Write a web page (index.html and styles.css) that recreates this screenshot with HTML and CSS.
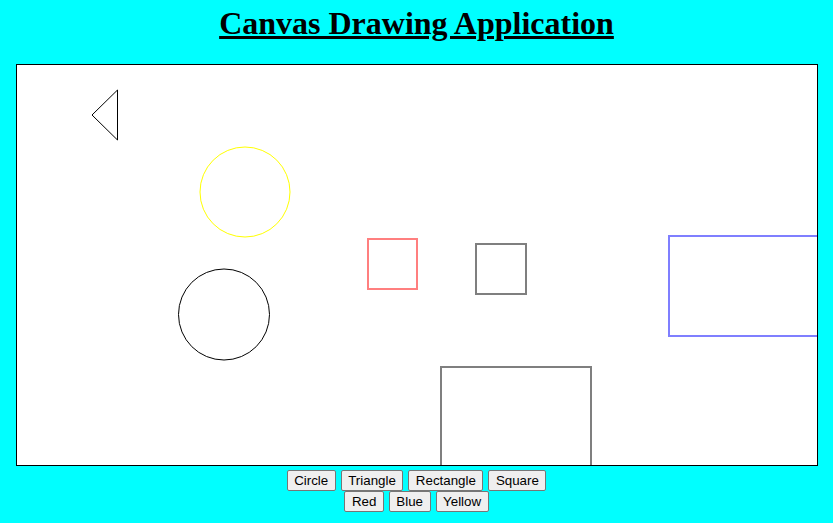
FILE: index.html
```html
<!DOCTYPE html>
<html>
<head>
<meta charset="utf-8">
<title>Canvas Drawing Application</title>
<link rel="stylesheet" href="styles.css">
</head>
<body>
<h1 class="title">Canvas Drawing Application</h1>
<div class="board">
  <svg class="canvas" width="800" height="400" viewBox="0 0 800 400" xmlns="http://www.w3.org/2000/svg">
    <path d="M100.5 25 L100.5 75 L75 50 Z" fill="none" stroke="#000" stroke-width="1"/>
    <circle cx="228" cy="127" r="45" fill="none" stroke="#ffff00" stroke-width="1"/>
    <circle cx="207" cy="249.5" r="45.5" fill="none" stroke="#000" stroke-width="1"/>
    <rect x="351" y="174" width="49" height="50" fill="none" stroke="rgba(255,0,0,0.5)" stroke-width="2"/>
    <rect x="459" y="179" width="50" height="50" fill="none" stroke="rgba(0,0,0,0.5)" stroke-width="2"/>
    <rect x="652" y="171" width="150" height="100" fill="none" stroke="rgba(0,0,255,0.5)" stroke-width="2"/>
    <rect x="424" y="302" width="150" height="100" fill="none" stroke="rgba(0,0,0,0.5)" stroke-width="2"/>
  </svg>
</div>
<div class="controls">
  <div class="row">
    <button class="btn">Circle</button>
    <button class="btn">Triangle</button>
    <button class="btn">Rectangle</button>
    <button class="btn">Square</button>
  </div>
  <div class="row">
    <button class="btn">Red</button>
    <button class="btn">Blue</button>
    <button class="btn">Yellow</button>
  </div>
</div>
</body>
</html>
```
FILE: styles.css
```css
html, body {
  margin: 0;
  padding: 0;
  background: #00ffff;
}
body {
  font-family: "Liberation Serif", "Times New Roman", serif;
}
.title {
  margin: 5px 0 22px;
  text-align: center;
  font-size: 32px;
  font-weight: bold;
  text-decoration: underline;
  line-height: 37px;
}
.board {
  width: 800px;
  height: 400px;
  margin: 0 auto;
  border: 1px solid #000;
  background: #fff;
  position: relative;
  left: 0.5px;
}
.canvas {
  display: block;
  overflow: hidden;
}
.controls {
  display: flex;
  flex-direction: column;
  align-items: center;
  margin-top: 4px;
}
.row {
  display: flex;
  gap: 5px;
}
.btn {
  box-sizing: border-box;
  height: 21px;
  padding: 0 6.5px;
  font-family: "Liberation Sans", Arial, sans-serif;
  font-size: 13.333px;
  color: #000;
  background: #efefef;
  border: 1px solid #767676;
  border-radius: 2px;
}
```
